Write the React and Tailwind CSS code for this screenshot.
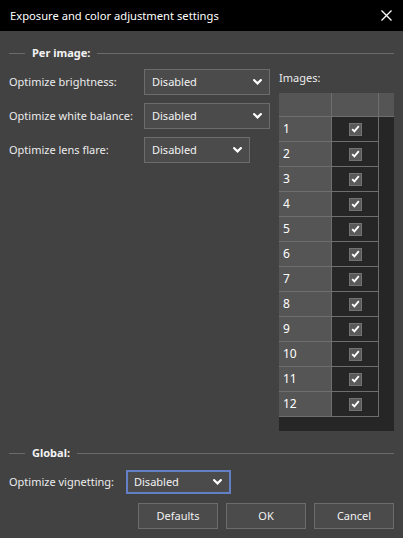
import React from "react";

const Chevron = () => (
  <svg width="9" height="6" viewBox="0 0 9 6" className="shrink-0">
    <polyline points="1.2,1.2 4.5,4.4 7.8,1.2" fill="none" stroke="#ffffff" strokeWidth="2.2" strokeLinecap="square" />
  </svg>
);

const Select = ({ w, focus }) => (
  <div
    className={
      "flex items-center justify-between bg-[#4b4b4b] shrink-0 " +
      (focus ? "h-[24px] border-2 border-[#6480c4] pl-[6px] pr-[7px]" : "h-[26px] border border-[#6c6c6c] pl-[7px] pr-[7px]")
    }
    style={{ width: w }}
  >
    <span className="text-[#f2f2f2]">Disabled</span>
    <Chevron />
  </div>
);

const Check = () => (
  <div className="w-[13px] h-[13px] bg-[#5a5a5a] border border-[#737373] flex items-center justify-center">
    <svg width="9" height="8" viewBox="0 0 9 8">
      <polyline points="1.2,4.2 3.4,6.4 7.8,1.2" fill="none" stroke="#ffffff" strokeWidth="1.9" />
    </svg>
  </div>
);

const GroupHeader = ({ label }) => (
  <div className="flex items-center h-[16px]">
    <div className="w-[16px] h-px bg-[#6a6a6a]" />
    <span className="mx-[7px] font-bold text-[#f2f2f2] whitespace-nowrap">{label}</span>
    <div className="flex-1 h-px bg-[#6a6a6a]" />
  </div>
);

export default function App() {
  const rows = [1, 2, 3, 4, 5, 6, 7, 8, 9, 10, 11, 12];
  return (
    <div
      className="w-[403px] h-[538px] bg-[#424242] flex flex-col text-[11px] leading-[16px] text-[#ececec] overflow-hidden whitespace-nowrap"
      style={{ fontFamily: '"Noto Sans", "Open Sans", sans-serif' }}
    >
      <div className="h-[31px] bg-black flex items-center justify-between pl-[10px] pr-[11px] shrink-0">
        <span className="text-white text-[11.2px]">Exposure and color adjustment settings</span>
        <svg width="11" height="11" viewBox="0 0 11 11">
          <path d="M0.5 0.5 L10.5 10.5 M10.5 0.5 L0.5 10.5" stroke="#ffffff" strokeWidth="1.3" />
        </svg>
      </div>
      <div className="flex-1 flex flex-col px-[9px] pt-[14px]">
        <GroupHeader label="Per image:" />
        <div className="flex mt-[8px]">
          <div className="flex flex-col gap-[8px]">
            {[
              ["Optimize brightness:", 126],
              ["Optimize white balance:", 126],
              ["Optimize lens flare:", 106],
            ].map(([l, w]) => (
              <div key={l} className="flex items-center">
                <span className="w-[135px]">{l}</span>
                <Select w={w} />
              </div>
            ))}
          </div>
          <div className="ml-auto w-[115px] flex flex-col">
            <span className="h-[16px] mb-[8px] pt-[1px]">Images:</span>
            <div className="flex flex-col bg-[#262626]">
              <div className="flex h-[24px] bg-[#555555] border-b border-[#6e6e6e]">
                <div className="w-[53px] border-r border-[#6e6e6e]" />
                <div className="w-[47px] border-r border-[#6e6e6e]" />
                <div className="flex-1" />
              </div>
              {rows.map((n) => (
                <div key={n} className="flex h-[25px]">
                  <div className="w-[100px] flex border-b border-[#6e6e6e]">
                    <div className="w-[53px] bg-[#555555] border-r border-[#6e6e6e] flex items-center pl-[4px] text-white text-[12px]">
                      {n}
                    </div>
                    <div className="w-[47px] border-r border-[#6e6e6e] flex items-center justify-center">
                      <Check />
                    </div>
                  </div>
                  <div className="flex-1" />
                </div>
              ))}
              <div className="h-[14px]" />
            </div>
          </div>
        </div>
        <div className="mt-[14px]">
          <GroupHeader label="Global:" />
        </div>
        <div className="flex items-center mt-[9px]">
          <span className="w-[117px]">Optimize vignetting:</span>
          <Select w={105} focus />
        </div>
        <div className="flex justify-end gap-[8px] mt-[9px]">
          {["Defaults", "OK", "Cancel"].map((b) => (
            <div
              key={b}
              className="w-[80px] h-[26px] bg-[#4b4b4b] border border-[#6c6c6c] flex items-center justify-center text-[#f2f2f2]"
            >
              {b}
            </div>
          ))}
        </div>
      </div>
    </div>
  );
}
